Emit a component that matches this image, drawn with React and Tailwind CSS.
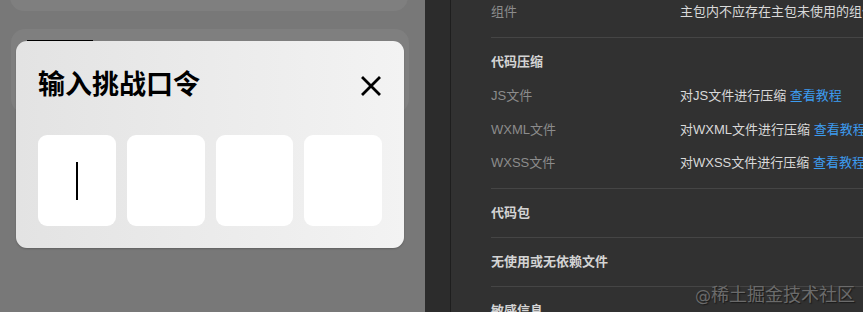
import React from "react"

const FONT = { fontFamily: '"Liberation Sans", "Noto Sans CJK SC", sans-serif' }

const sections = [
  {
    title: "代码压缩",
    rows: [
      { label: "JS文件", value: "对JS文件进行压缩" },
      { label: "WXML文件", value: "对WXML文件进行压缩" },
      { label: "WXSS文件", value: "对WXSS文件进行压缩" },
    ],
  },
  { title: "代码包", rows: [] },
  { title: "无使用或无依赖文件", rows: [] },
  { title: "敏感信息", rows: [] },
]

function CloseIcon() {
  return (
    <svg width="20" height="20" viewBox="0 0 20 20" className="shrink-0">
      <path d="M2 2 L18 18 M18 2 L2 18" stroke="#000" strokeWidth="2.8" strokeLinecap="square" />
    </svg>
  )
}

function PhonePreview() {
  return (
    <div className="relative h-full w-[425px] shrink-0 overflow-hidden bg-[#787878]">
      <div className="ml-[10px] mt-[-20px] h-[31px] w-[398px] rounded-[14px] bg-[#7f7f7f]" />
      <div className="ml-[11px] mt-[18px] h-[84px] w-[398px] rounded-[14px] bg-[#7f7f7f] pl-[16px] pt-[11px]">
        <div className="h-[1px] w-[66px] bg-black" />
      </div>

      {/* challenge dialog sits over the page */}
      <div className="absolute left-[16px] top-[41px] w-[388px] rounded-[11px] bg-linear-to-r from-[#e3e3e3] to-[#f3f3f3] px-[22px] pb-[22px] pt-[24px] shadow-[0_1px_2px_rgba(0,0,0,0.2)]">
        <div className="flex h-[36px] items-center justify-between">
          <h2 className="text-[27px] font-bold leading-[36px] text-black" style={{ fontFamily: '"Noto Sans CJK SC", sans-serif' }}>
            输入挑战口令
          </h2>
          <div className="mr-[1px] mt-[6px]">
            <CloseIcon />
          </div>
        </div>
        <div className="mt-[34px] grid grid-cols-4 gap-[11px]">
          {[0, 1, 2, 3].map((i) => (
            <div key={i} className="flex h-[91px] items-center justify-center rounded-[9px] bg-white">
              {i === 0 ? <div className="h-[38px] w-[1.5px] bg-black" /> : null}
            </div>
          ))}
        </div>
      </div>
    </div>
  )
}

function SettingsPanel() {
  return (
    <div className="relative flex h-full flex-1 overflow-hidden" style={FONT}>
      <div className="h-full w-[25px] shrink-0 bg-[#2c2c2c]" />
      <div className="h-full w-[1px] shrink-0 bg-[#1e1e1e]" />
      <div className="h-full flex-1 bg-[#313131] pl-[40px] text-[13px]">
        <div className="flex h-[24px] items-center">
          <div className="w-[189px] shrink-0 text-[#8c8c8c]">组件</div>
          <div className="whitespace-nowrap text-[#d9d9d9]">主包内不应存在主包未使用的组件</div>
        </div>
        <div className="h-[13px]" />
        {sections.map((section) => (
          <div
            key={section.title}
            className={`border-t border-[#454545] pt-[12px] ${section.rows.length > 0 ? "pb-[13px]" : "pb-[12px]"}`}
          >
            <div className="flex h-[24px] items-center font-bold text-[#d4d4d4]">{section.title}</div>
            {section.rows.length > 0 ? (
              <div className="mt-[10px] flex flex-col gap-[9.5px]">
                {section.rows.map((row) => (
                  <div key={row.label} className="flex h-[24px] items-center whitespace-nowrap">
                    <div className="w-[189px] shrink-0 text-[#8c8c8c]">{row.label}</div>
                    <div className="text-[#d9d9d9]">
                      {row.value} <span className="text-[#3d9cf0]">查看教程</span>
                    </div>
                  </div>
                ))}
              </div>
            ) : null}
          </div>
        ))}
      </div>

      {/* site watermark baked into the screenshot */}
      <div
        className="absolute right-[8px] top-[280px] flex items-baseline whitespace-nowrap leading-[26px] text-[#6b6b6b] [text-shadow:1px_1px_1px_#1a1a1a]"
        style={{ fontFamily: '"Noto Sans CJK SC", sans-serif' }}
      >
        <span className="text-[16px]" style={{ fontFamily: '"DejaVu Sans", sans-serif' }}>@</span>
        <span className="text-[18px]">稀土掘金技术社区</span>
      </div>
    </div>
  )
}

export default function App() {
  return (
    <div className="flex h-[312px] w-[863px] overflow-hidden">
      <PhonePreview />
      <SettingsPanel />
    </div>
  )
}
